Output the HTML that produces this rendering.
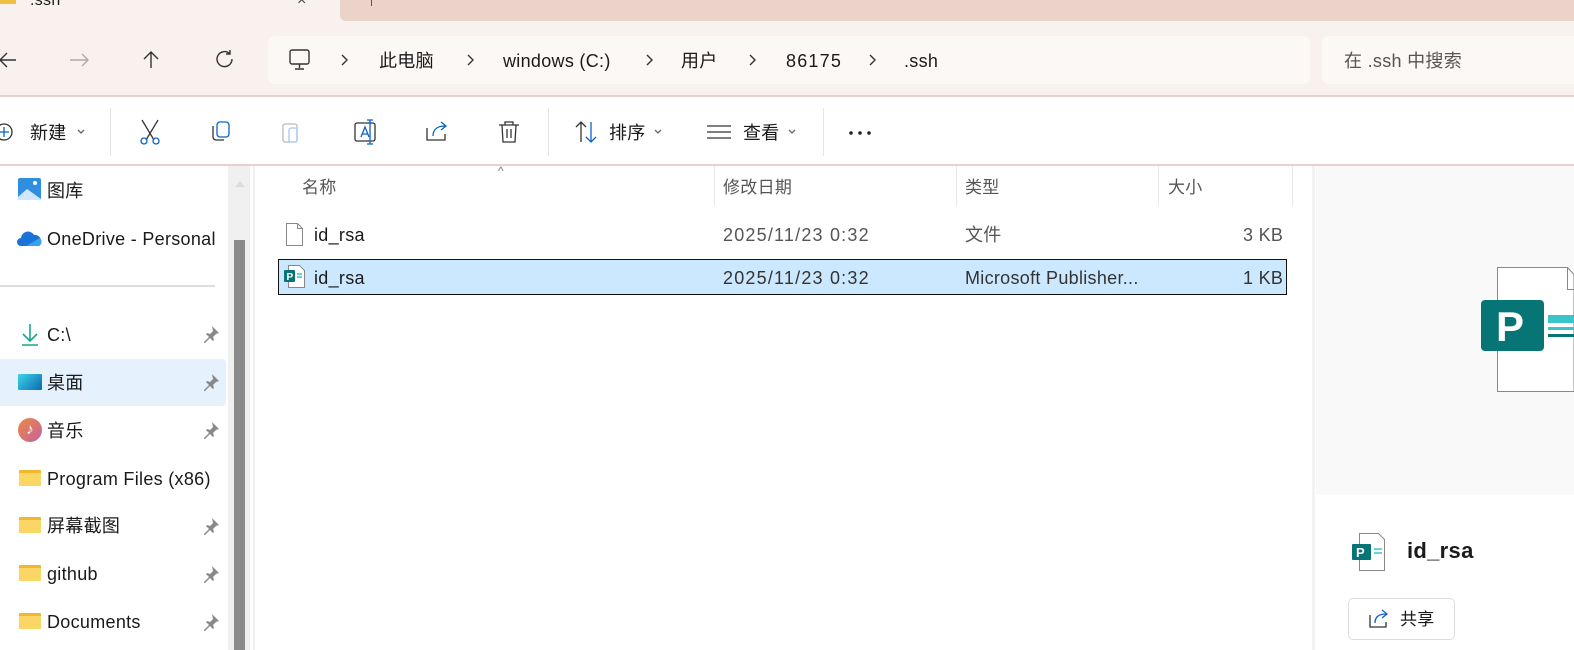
<!DOCTYPE html>
<html><head><meta charset="utf-8"><style>
*{margin:0;padding:0;box-sizing:border-box}
body{width:1574px;height:650px;overflow:hidden;background:#fff;font-family:"Liberation Sans","Noto Sans CJK SC",sans-serif;color:#1a1a1a;position:relative}
.a{position:absolute}
.t{font-size:18px;white-space:nowrap;letter-spacing:0.3px;line-height:22px}
.c{margin-top:0}
.g{color:#555}
.n{letter-spacing:1.2px}
</style></head><body>
<div class="a" style="left:0;top:0;width:1574px;height:96px;background:#f9f1ee"></div>
<div class="a" style="left:340px;top:0;width:1234px;height:21px;background:#ecd3ca;border-radius:0 0 0 6px"></div>
<div class="a" style="left:0;top:-4px;width:16px;height:8px;background:#f0c040"></div>
<div class="a t" style="left:30px;top:-10px;font-size:16px">.ssh</div>
<div class="a t" style="left:297px;top:-10px;font-size:16px;color:#444">×</div>
<div class="a" style="left:371px;top:0;width:1px;height:6px;background:#555"></div>
<svg class="a" style="left:0;top:48px" width="260" height="24" fill="none" stroke-width="1.4">
<path d="M16 12H1M7 5L0 12l7 7" stroke="#333"/>
<path d="M70 12h18M82 6l6 6-6 6" stroke="#aaa"/>
<path d="M151 20V4M144 11l7-7 7 7" stroke="#333"/>
<path d="M230 6a7.5 7.5 0 1 0 2 5M230 2v4h-4" stroke="#333"/>
</svg>
<div class="a" style="left:268px;top:36px;width:1042px;height:48px;background:#fcf8f6;border-radius:6px"></div>
<svg class="a" style="left:288px;top:48px" width="24" height="24" fill="none" stroke="#333" stroke-width="1.4"><rect x="2" y="2" width="19" height="14" rx="2"/><path d="M11.5 16v4M7 21h9"/></svg>
<svg class="a" style="left:338px;top:52px" width="560" height="16" fill="none" stroke="#333" stroke-width="1.4"><path d="M4 3l5 5-5 5M130 3l5 5-5 5M309 3l5 5-5 5M412 3l5 5-5 5M532 3l5 5-5 5"/></svg>
<div class="a t c" style="left:379px;top:50px">此电脑</div>
<div class="a t" style="left:503px;top:50px">windows (C:)</div>
<div class="a t c" style="left:681px;top:50px">用户</div>
<div class="a t n" style="left:786px;top:50px">86175</div>
<div class="a t" style="left:904px;top:50px">.ssh</div>
<div class="a" style="left:1322px;top:36px;width:260px;height:48px;background:#fcf8f6;border-radius:6px"></div>
<div class="a t c" style="left:1344px;top:50px;color:#555">在 .ssh 中搜索</div>
<div class="a" style="left:0;top:95px;width:1574px;height:2px;background:#e6d2cb"></div>
<div class="a" style="left:0;top:164px;width:1574px;height:2px;background:#e6d2cb"></div>
<svg class="a" style="left:0;top:118px" width="880" height="30" fill="none" stroke-width="1.3">
<circle cx="4" cy="14" r="8" stroke="#333"/><path d="M4 9v10M-1 14h10" stroke="#0a64c8"/>
<path d="M78 12l3 3 3-3" stroke="#666"/>
<path d="M142 2l12 20M158 2l-12 20" stroke="#333"/><circle cx="144" cy="23" r="3" stroke="#0a64c8"/><circle cx="156" cy="23" r="3" stroke="#0a64c8"/>
<rect x="217" y="4" width="12" height="15" rx="3" stroke="#0a64c8"/><path d="M213 8v11a3 3 0 0 0 3 3h8" stroke="#333"/>
<rect x="283" y="6" width="14" height="18" rx="2" stroke="#bbb"/><rect x="289" y="10" width="8" height="14" rx="2" stroke="#a8c8ee"/>
<rect x="355" y="5" width="20" height="18" rx="2" stroke="#333"/><path d="M361 19l4-10 4 10M362 16h6M370 2v24M367 2h6M367 26h6" stroke="#0a64c8"/>
<path d="M427 10v12h18v-6" stroke="#333"/><path d="M433 18c0-7 5-10 12-10M441 4l5 4-5 4" stroke="#0a64c8"/>
<path d="M499 7h20M505 7V4h8v3M502 7l1 17h12l1-17M507 11v9M511 11v9" stroke="#333"/>
<path d="M581 24V4M576 9l5-5 5 5" stroke="#333"/><path d="M591 4v20M586 19l5 5 5-5" stroke="#0a64c8"/>
<path d="M655 12l3 3 3-3M789 12l3 3 3-3" stroke="#666"/>
<path d="M707 8h24M707 14h24M707 20h24" stroke="#333"/>
<circle cx="851" cy="15" r="1.8" fill="#222"/><circle cx="860" cy="15" r="1.8" fill="#222"/><circle cx="869" cy="15" r="1.8" fill="#222"/>
</svg>
<div class="a t c" style="left:30px;top:122px">新建</div>
<div class="a t c" style="left:609px;top:122px">排序</div>
<div class="a t c" style="left:743px;top:122px">查看</div>
<div class="a" style="left:110px;top:108px;width:1px;height:48px;background:#e4e4e4"></div>
<div class="a" style="left:548px;top:108px;width:1px;height:48px;background:#e4e4e4"></div>
<div class="a" style="left:823px;top:108px;width:1px;height:48px;background:#e4e4e4"></div>
<svg class="a" style="left:18px;top:178px" width="24" height="24"><rect x="0" y="0" width="23" height="22" rx="2" fill="#2f8ee0"/><path d="M0 19l9-8 14 10v1H0z" fill="#cfe6fb"/><circle cx="17" cy="5" r="2" fill="#fff"/></svg>
<div class="a t c" style="left:47px;top:180px">图库</div>
<svg class="a" style="left:17px;top:228px" width="26" height="20"><path d="M4 18a4 4 0 0 1 0-8 7 7 0 0 1 13-3 6 6 0 0 1 7 6 5 5 0 0 1-2 5z" fill="#1a74d8"/><path d="M9 18l14-8a5 5 0 0 1-1 8z" fill="#3aa0f0"/></svg>
<div class="a t" style="left:47px;top:228px">OneDrive - Personal</div>
<div class="a" style="left:0;top:285px;width:215px;height:2px;background:#ddd"></div>
<svg class="a" style="left:20px;top:323px" width="22" height="24" fill="none" stroke="#17a88a" stroke-width="1.6"><path d="M10 1v17M3 11l7 7 7-7M2 22h16"/></svg>
<div class="a t" style="left:47px;top:324px">C:\</div>
<div class="a" style="left:0;top:359px;width:226px;height:47px;background:#e5f1fc;border-radius:0 4px 4px 0"></div>
<div class="a" style="left:18px;top:374px;width:24px;height:16px;background:linear-gradient(135deg,#3ed5e8,#0a6ab0);border-radius:1px"></div>
<div class="a t c" style="left:47px;top:372px">桌面</div>
<div class="a" style="left:18px;top:418px;width:24px;height:24px;border-radius:50%;background:linear-gradient(135deg,#f08a40,#c060a0);color:#fff;font-size:15px;text-align:center;line-height:24px">♪</div>
<div class="a t c" style="left:47px;top:420px">音乐</div>
<div class="a t" style="left:47px;top:468px">Program Files (x86)</div>
<div class="a t c" style="left:47px;top:515px">屏幕截图</div>
<div class="a t" style="left:47px;top:563px">github</div>
<div class="a t" style="left:47px;top:611px">Documents</div>
<div class="a" style="left:19px;top:470px;width:22px;height:16px;background:#fcd664;border-radius:1px;border-top:3px solid #f0b830"></div>
<div class="a" style="left:19px;top:517px;width:22px;height:16px;background:#fcd664;border-radius:1px;border-top:3px solid #f0b830"></div>
<div class="a" style="left:19px;top:565px;width:22px;height:16px;background:#fcd664;border-radius:1px;border-top:3px solid #f0b830"></div>
<div class="a" style="left:19px;top:613px;width:22px;height:16px;background:#fcd664;border-radius:1px;border-top:3px solid #f0b830"></div>
<svg class="a" style="left:203px;top:325px" width="18" height="310" fill="#888">
<path d="M9 1l7 7-3 1-3 3 1 3-1 1-3-3-5 5-1 0 0-1 5-5-3-3 1-1 3 1 3-3z"/>
<path transform="translate(0,48)" d="M9 1l7 7-3 1-3 3 1 3-1 1-3-3-5 5-1 0 0-1 5-5-3-3 1-1 3 1 3-3z"/>
<path transform="translate(0,96)" d="M9 1l7 7-3 1-3 3 1 3-1 1-3-3-5 5-1 0 0-1 5-5-3-3 1-1 3 1 3-3z"/>
<path transform="translate(0,192)" d="M9 1l7 7-3 1-3 3 1 3-1 1-3-3-5 5-1 0 0-1 5-5-3-3 1-1 3 1 3-3z"/>
<path transform="translate(0,240)" d="M9 1l7 7-3 1-3 3 1 3-1 1-3-3-5 5-1 0 0-1 5-5-3-3 1-1 3 1 3-3z"/>
<path transform="translate(0,288)" d="M9 1l7 7-3 1-3 3 1 3-1 1-3-3-5 5-1 0 0-1 5-5-3-3 1-1 3 1 3-3z"/>
</svg>
<div class="a" style="left:228px;top:166px;width:22px;height:484px;background:#f0f0f0"></div>
<div class="a" style="left:234px;top:240px;width:11px;height:410px;background:#8a8a8a"></div>
<div class="a" style="left:235px;top:176px;width:0;height:0;border:5px solid transparent;border-bottom:6px solid #ddd"></div>
<div class="a" style="left:253px;top:166px;width:2px;height:484px;background:#f0f0f0"></div>
<div class="a t g c" style="left:302px;top:177px;font-size:17px">名称</div>
<div class="a" style="left:498px;top:164px;font-size:12px;color:#777">^</div>
<div class="a t g c" style="left:723px;top:177px;font-size:17px">修改日期</div>
<div class="a t g c" style="left:965px;top:177px;font-size:17px">类型</div>
<div class="a t g c" style="left:1168px;top:177px;font-size:17px">大小</div>
<div class="a" style="left:714px;top:166px;width:1px;height:40px;background:#e8e8e8"></div>
<div class="a" style="left:956px;top:166px;width:1px;height:40px;background:#e8e8e8"></div>
<div class="a" style="left:1158px;top:166px;width:1px;height:40px;background:#e8e8e8"></div>
<div class="a" style="left:1292px;top:166px;width:1px;height:40px;background:#e8e8e8"></div>
<svg class="a" style="left:286px;top:223px" width="18" height="24" fill="#fff" stroke="#888"><path d="M.5 .5h11l5 5v17H.5z"/><path d="M11.5 .5v5h5" fill="none"/></svg>
<div class="a t" style="left:314px;top:224px">id_rsa</div>
<div class="a t g n" style="left:723px;top:224px">2025/11/23 0:32</div>
<div class="a t g c" style="left:965px;top:224px">文件</div>
<div class="a t g" style="left:1243px;top:224px">3 KB</div>
<div class="a" style="left:278px;top:259px;width:1009px;height:36px;background:#cce8ff;border:1px solid #111"></div>
<svg class="a" style="left:284px;top:265px" width="22" height="24"><path d="M4.5 .5h11l5 5v17h-16z" fill="#fff" stroke="#888"/><rect x="0" y="5" width="11" height="12" rx="1" fill="#077575"/><text x="2.5" y="15" font-size="10" font-weight="bold" fill="#fff" font-family="Liberation Sans">P</text><path d="M13 9h5M13 12h5" stroke="#3cc4cc" stroke-width="1.5"/></svg>
<div class="a t" style="left:314px;top:267px">id_rsa</div>
<div class="a t n" style="left:723px;top:267px;color:#333">2025/11/23 0:32</div>
<div class="a t" style="left:965px;top:267px;color:#333">Microsoft Publisher...</div>
<div class="a t" style="left:1243px;top:267px;color:#333">1 KB</div>
<div class="a" style="left:1312px;top:166px;width:3px;height:484px;background:#f2f2f2"></div>
<div class="a" style="left:1316px;top:166px;width:258px;height:329px;background:#f9f9f9"></div>
<svg class="a" style="left:1480px;top:267px" width="94" height="128"><path d="M17.5 .5h70l6.5 7v117h-76.5z" fill="#fff" stroke="#888"/><path d="M87.5 .5v22h7" fill="none" stroke="#888"/><rect x="1" y="33" width="63" height="51" rx="4" fill="#077575"/><text x="16" y="74" font-size="42" font-weight="bold" fill="#fff" font-family="Liberation Sans">P</text><rect x="68" y="48" width="26" height="8" fill="#3cc4cc"/><rect x="68" y="60" width="26" height="3" fill="#3cc4cc"/><rect x="68" y="67" width="26" height="3" fill="#077575"/></svg>
<svg class="a" style="left:1352px;top:533px" width="34" height="38"><path d="M7.5 .5h19l6 6v31h-25z" fill="#fff" stroke="#888"/><rect x="0" y="11" width="19" height="16" rx="1" fill="#077575"/><text x="4" y="24" font-size="13" font-weight="bold" fill="#fff" font-family="Liberation Sans">P</text><path d="M22 16h8M22 20h8" stroke="#3cc4cc" stroke-width="1.6"/></svg>
<div class="a t" style="left:1407px;top:540px;font-size:22px;font-weight:bold">id_rsa</div>
<div class="a" style="left:1348px;top:598px;width:107px;height:42px;background:#fff;border:1px solid #ddd;border-radius:5px"></div>
<svg class="a" style="left:1367px;top:607px" width="24" height="24" fill="none" stroke-width="1.3"><path d="M3 8v12h16v-5" stroke="#333"/><path d="M8 16c0-6 4-9 11-9M15 3l5 4-5 4" stroke="#0a64c8"/></svg>
<div class="a t c" style="left:1400px;top:609px;font-size:17px">共享</div>
</body></html>
